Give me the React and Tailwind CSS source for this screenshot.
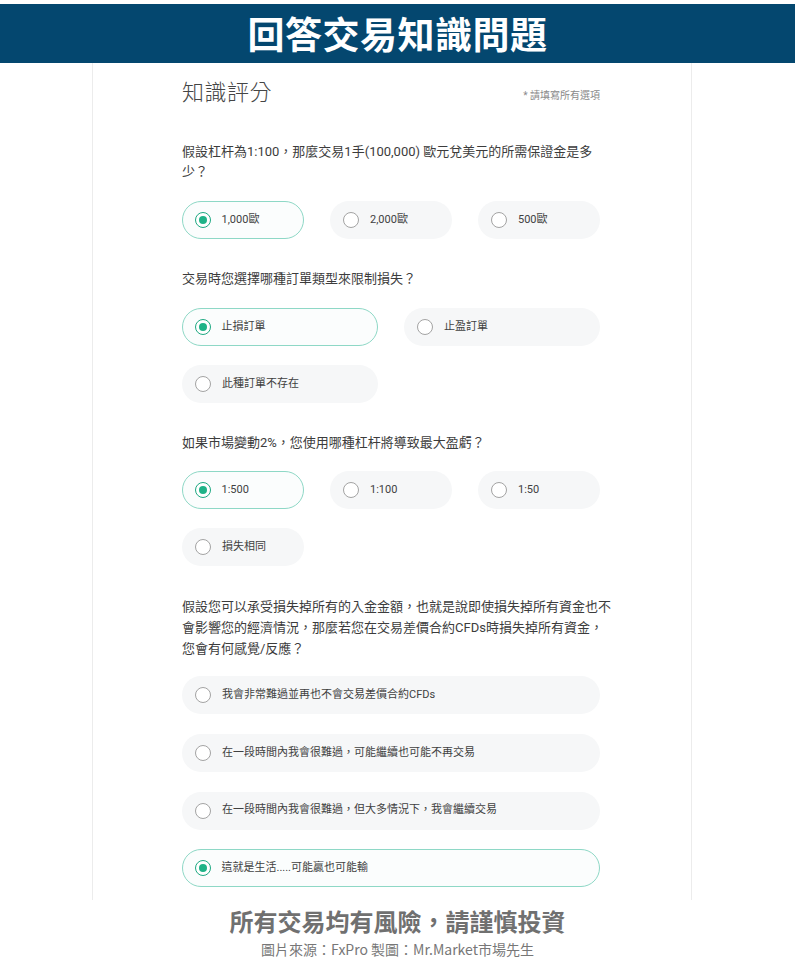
import React from "react";

const FONT = { fontFamily: '"Noto Sans CJK TC", "Noto Sans", sans-serif' };
const BODY = { fontFamily: 'Roboto, "Noto Sans CJK TC", sans-serif' };

function Radio({ checked }) {
  return checked ? (
    <span className="flex h-[16px] w-[16px] shrink-0 items-center justify-center rounded-full border-[1.5px] border-[#1ea982] bg-white">
      <span className="h-[8px] w-[8px] rounded-full bg-[#1fb387]" />
    </span>
  ) : (
    <span className="h-[16px] w-[16px] shrink-0 rounded-full border-[1.5px] border-[#a3a3a3] bg-white" />
  );
}

function Option({ label, checked }) {
  return (
    <div
      className={
        "flex h-[38px] items-center gap-[11px] rounded-full pr-4 text-[11px] text-[#414141] " +
        (checked
          ? "border-[1.5px] border-[#8ed8c6] bg-[#fbfdfd] pl-[11.5px]"
          : "bg-[#f6f7f8] pl-[13px]")
      }
    >
      <Radio checked={checked} />
      <span className="whitespace-nowrap">{label}</span>
    </div>
  );
}

function Question({ text, children }) {
  return (
    <div className="flex flex-col gap-[18px]">
      <p className="whitespace-nowrap text-[13px] leading-[20px] text-[#3c3c3c]">{text}</p>
      {children}
    </div>
  );
}

export default function App() {
  return (
    <div className="min-h-[968px] bg-white pt-[4px]" style={FONT}>
      <div className="flex h-[59px] items-center justify-center bg-[#04476f]">
        <h1 className="text-[37px] font-bold leading-none tracking-[0.5px] text-white">
          回答交易知識問題
        </h1>
      </div>

      <div
        className="ml-[92px] w-[600px] border-x border-[#ececec] pb-[13px] pl-[89px] pr-[91px]"
        style={BODY}
      >
        <div className="flex items-end justify-between pt-[11px]">
          <div
            className="text-[22px] font-light leading-[33px] tracking-[0.5px] text-[#454545]"
            style={FONT}
          >
            知識評分
          </div>
          <div className="pb-[4px] text-[10px] text-[#8a8a8a]">* 請填寫所有選項</div>
        </div>

        <div className="mt-[35px] flex flex-col gap-[30px]">
          <Question
            text={
              <>
                假設杠杆為1:100，那麼交易1手(100,000) 歐元兌美元的所需保證金是多
                <br />
                少？
              </>
            }
          >
            <div className="mt-[1px] grid grid-cols-3 gap-x-[26px]">
              <Option label="1,000歐" checked />
              <Option label="2,000歐" />
              <Option label="500歐" />
            </div>
          </Question>

          <Question text="交易時您選擇哪種訂單類型來限制損失？">
            <div className="mt-[1px] grid grid-cols-2 gap-x-[26px] gap-y-[19px]">
              <Option label="止損訂單" checked />
              <Option label="止盈訂單" />
              <Option label="此種訂單不存在" />
            </div>
          </Question>

          <Question text="如果市場變動2%，您使用哪種杠杆將導致最大盈虧？">
            <div className="grid grid-cols-3 gap-x-[26px] gap-y-[19px]">
              <Option label="1:500" checked />
              <Option label="1:100" />
              <Option label="1:50" />
              <Option label="損失相同" />
            </div>
          </Question>

          <div className="flex flex-col gap-[17px]">
            <p className="whitespace-nowrap text-[13px] leading-[21px] text-[#3c3c3c]">
              假設您可以承受損失掉所有的入金金額，也就是說即使損失掉所有資金也不
              <br />
              會影響您的經濟情況，那麼若您在交易差價合約CFDs時損失掉所有資金，
              <br />
              您會有何感覺/反應？
            </p>
            <div className="flex flex-col gap-[19.8px]">
              <Option label="我會非常難過並再也不會交易差價合約CFDs" />
              <Option label="在一段時間內我會很難過，可能繼續也可能不再交易" />
              <Option label="在一段時間內我會很難過，但大多情況下，我會繼續交易" />
              <Option label="這就是生活.....可能贏也可能輸" checked />
            </div>
          </div>
        </div>
      </div>

      <div className="flex flex-col items-center">
        <div className="mt-[6px] text-[24px] font-bold leading-[30px] text-[#707070]">
          所有交易均有風險，請謹慎投資
        </div>
        <div className="mt-[3px] text-[14px] leading-[20px] text-[#777777]">
          圖片來源：FxPro 製圖：Mr.Market市場先生
        </div>
      </div>
    </div>
  );
}
